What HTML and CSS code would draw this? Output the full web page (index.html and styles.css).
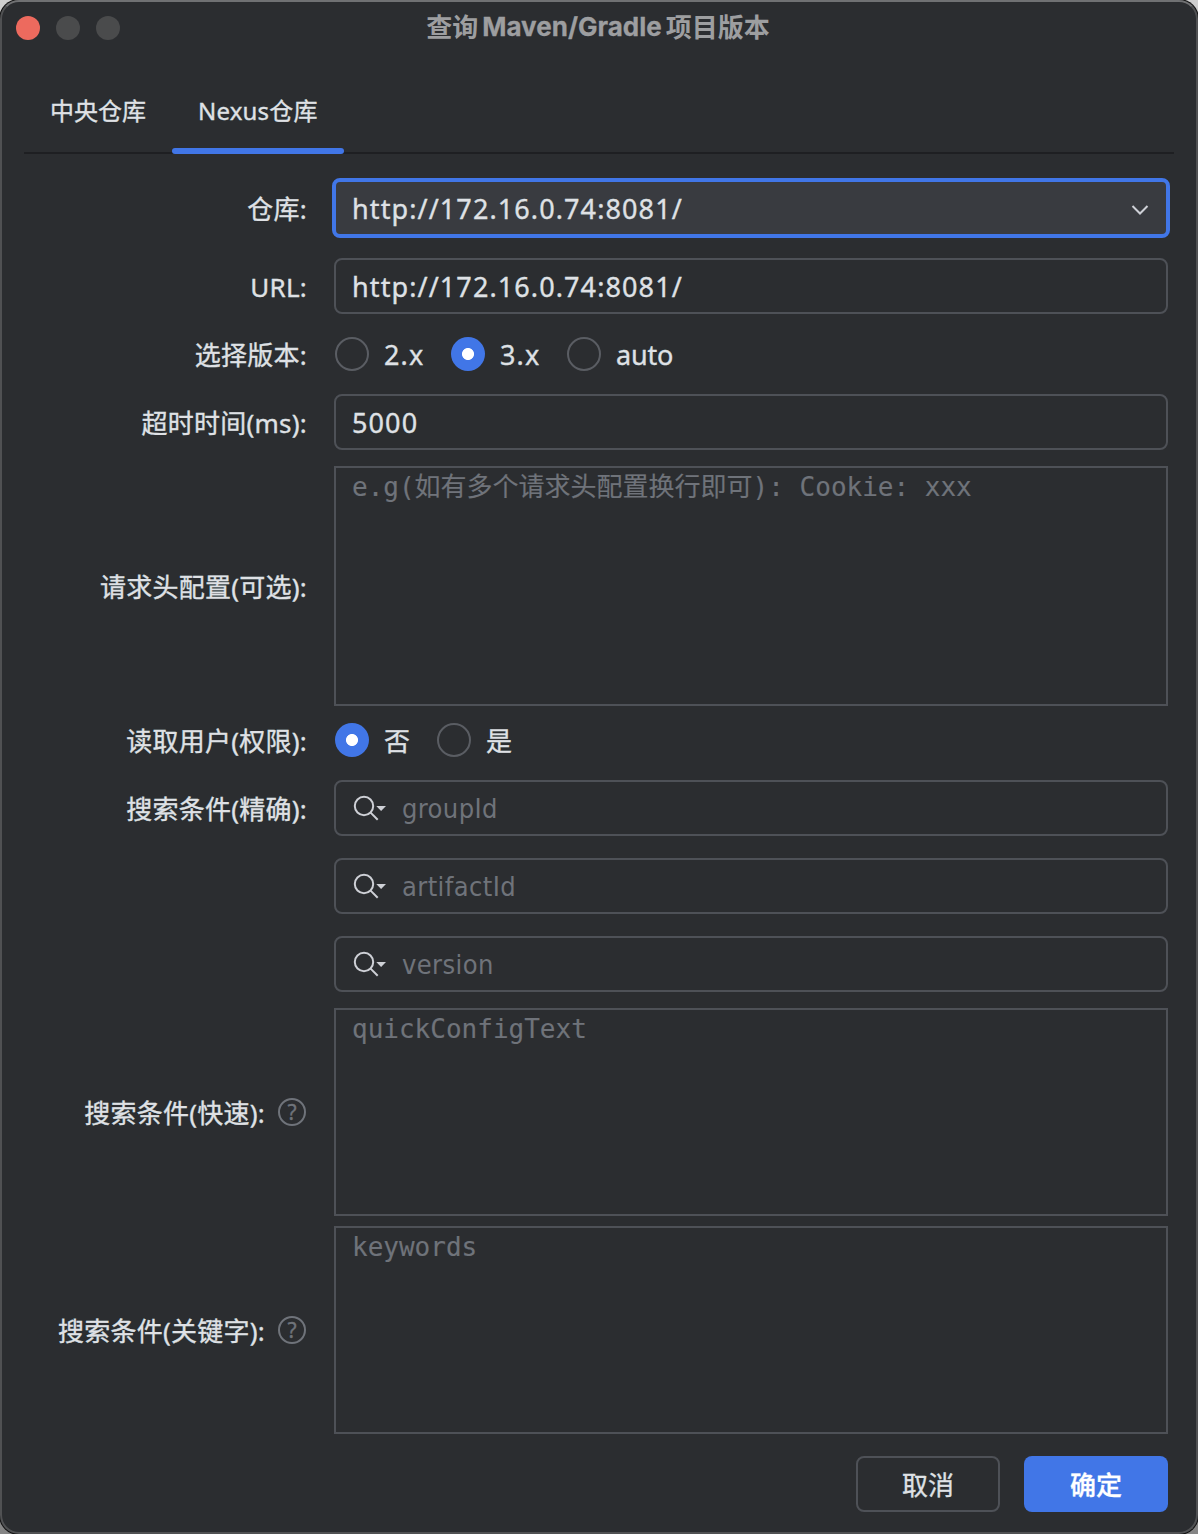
FILE: index.html
```html
<!DOCTYPE html>
<html lang="zh-CN">
<head>
<meta charset="utf-8">
<title>查询 Maven/Gradle 项目版本</title>
<link rel="stylesheet" href="styles.css">
</head>
<body>
<svg class="defs" width="0" height="0" aria-hidden="true">
  <symbol id="search" viewBox="0 0 34 28">
    <circle cx="12" cy="12" r="9.2" fill="none" stroke="#ced0d6" stroke-width="2"/>
    <path d="M18.6 18.6 25.7 25.7" stroke="#ced0d6" stroke-width="2" fill="none"/>
    <path d="M24.3 12H34L29.1 17Z" fill="#ced0d6"/>
  </symbol>
</svg>
<div class="window">
  <header class="titlebar">
    <div class="lights"><i class="light close"></i><i class="light"></i><i class="light"></i></div>
    <h1 class="title"><span>查询</span><span class="title-latin">Maven/Gradle</span><span>项目版本</span></h1>
  </header>
  <nav class="tabs">
    <div class="tab">中央仓库</div>
    <div class="tab active">Nexus仓库</div>
  </nav>
  <main class="form">
    <div class="row row-combo">
      <label class="label">仓库:</label>
      <div class="combo"><span class="value">http://172.16.0.74:8081/</span>
        <svg class="chevron" width="18" height="12" viewBox="0 0 18 12"><path d="M1.5 2 9 9.5 16.5 2" fill="none" stroke="#ced0d6" stroke-width="2"/></svg>
      </div>
    </div>
    <div class="row row-url">
      <label class="label">URL:</label>
      <div class="input"><span class="value">http://172.16.0.74:8081/</span></div>
    </div>
    <div class="row row-radio">
      <label class="label">选择版本:</label>
      <div class="radios">
        <div class="option"><i class="radio"></i><span class="value">2.x</span></div>
        <div class="option"><i class="radio checked"></i><span class="value">3.x</span></div>
        <div class="option"><i class="radio"></i><span class="value word">auto</span></div>
      </div>
    </div>
    <div class="row row-timeout">
      <label class="label">超时时间(ms):</label>
      <div class="input"><span class="value">5000</span></div>
    </div>
    <div class="row row-headers">
      <label class="label">请求头配置(可选):</label>
      <div class="area area-tall">e.g(如有多个请求头配置换行即可): Cookie: xxx</div>
    </div>
    <div class="row row-radio">
      <label class="label">读取用户(权限):</label>
      <div class="radios radios-cjk">
        <div class="option"><i class="radio checked"></i><span class="choice">否</span></div>
        <div class="option"><i class="radio"></i><span class="choice">是</span></div>
      </div>
    </div>
    <div class="row row-search">
      <label class="label">搜索条件(精确):</label>
      <div class="input"><svg class="search" width="34" height="28"><use href="#search"/></svg><span class="hint">groupId</span></div>
    </div>
    <div class="row row-search">
      <span></span>
      <div class="input"><svg class="search" width="34" height="28"><use href="#search"/></svg><span class="hint">artifactId</span></div>
    </div>
    <div class="row row-last-search">
      <span></span>
      <div class="input"><svg class="search" width="34" height="28"><use href="#search"/></svg><span class="hint">version</span></div>
    </div>
    <div class="row row-quick">
      <label class="label with-help"><span>搜索条件(快速):</span><i class="help">?</i></label>
      <div class="area">quickConfigText</div>
    </div>
    <div class="row row-keywords">
      <label class="label with-help"><span>搜索条件(关键字):</span><i class="help">?</i></label>
      <div class="area">keywords</div>
    </div>
  </main>
  <footer class="actions">
    <button class="button">取消</button>
    <button class="button primary">确定</button>
  </footer>
</div>
</body>
</html>
```
FILE: styles.css
```css
* { box-sizing: border-box; }

body {
  margin: 0;
  background: linear-gradient(#cfcfcf, #858585);
  color: #dfe1e5;
  font: 26px/32px "Noto Sans", "Noto Sans CJK SC", sans-serif;
  -webkit-text-stroke: .35px currentColor;
}

.defs { position: absolute; }

.window {
  width: 1198px;
  height: 1534px;
  overflow: hidden;
  border: 2px solid #505153;
  border-top-color: #707173;
  border-radius: 19px;
  background: #2b2d30;
  box-shadow: 0 0 0 1px #111;
}

.titlebar {
  display: grid;
  grid-template-columns: 1fr auto 1fr;
  height: 70px;
}

.lights { display: flex; gap: 16px; padding: 14px 0 0 14px; }
.light { width: 24px; height: 24px; border-radius: 50%; background: #4a4b4c; }
.close { background: #ed6a5e; }

.title {
  display: flex;
  gap: 4px;
  margin: 8px 2px 0 0;
  color: #9d9ea0;
  font: 700 26px/32px "Noto Sans CJK SC", sans-serif;
  -webkit-text-stroke: 0;
}
.title-latin { padding-top: 1px; font-family: Inter, sans-serif; line-height: 31px; -webkit-text-stroke: .3px currentColor; }

.tabs {
  display: flex;
  height: 82px;
  margin: 0 22px;
  border-bottom: 2px solid #1e1f22;
  font-size: 24px;
}
.tab { padding: 23px 26px 0; height: 82px; }
.active {
  display: flex;
  flex-direction: column;
  justify-content: space-between;
  width: 172px;
  padding: 23px 0 0;
  text-indent: 26px;
  letter-spacing: .2px;
}
.active::after {
  content: "";
  height: 6px;
  border-radius: 3px;
  background: #4176e7;
}

.form { display: flex; flex-direction: column; padding: 24px 28px 0 0; }
.row {
  display: grid;
  grid-template-columns: 306px 834px;
  column-gap: 26px;
  align-items: center;
}
.label { padding: 1px 1px 0 0; text-align: right; letter-spacing: .25px; }

.row-combo { height: 60px; margin-bottom: 20px; }
.row-url { margin-bottom: 23px; }
.row-radio { height: 34px; margin-bottom: 23px; }
.row-timeout { margin-bottom: 16px; }
.row-headers { margin-bottom: 17px; }
.row-search { margin-bottom: 22px; }
.row-last-search { margin-bottom: 16px; }
.row-quick { margin-bottom: 10px; }

.input, .combo {
  display: flex;
  align-items: center;
  height: 56px;
  padding: 0 16px;
  border: 2px solid #4e5157;
  border-radius: 8px;
}
.combo {
  height: 60px;
  margin: 0 -2px;
  border: 4px solid #4176e7;
  background: #393b40;
}
.value { padding-top: 1px; font-size: 27px; letter-spacing: 1.1px; }
.word { letter-spacing: -.2px; }
.choice { padding-top: 1px; }
.chevron { margin: 4px 1px 0 auto; }

.search { flex: none; margin-right: 16px; }
.hint {
  padding-top: 2px;
  color: #6f737a;
  font: 27px/32px "DejaVu Sans Condensed", "DejaVu Sans", sans-serif;
  font-stretch: condensed;
  letter-spacing: .4px;
  -webkit-text-stroke: 0;
}

.radios { display: flex; height: 34px; padding-left: 1px; }
.option { display: flex; align-items: center; width: 116px; gap: 15px; }
.radios-cjk .option { width: 102px; }
.radio { flex: none; width: 34px; height: 34px; border: 2px solid #5a5d63; border-radius: 50%; }
.checked { border: 0; background: radial-gradient(circle, #fff 0 5.6px, #4176e7 6.4px); }

.area {
  height: 208px;
  padding: 3px 16px;
  border: 2px solid #4e5157;
  color: #6f737a;
  font: 26px/32px "DejaVu Sans Mono", "Noto Sans CJK SC", monospace;
  -webkit-text-stroke: .15px currentColor;
}
.area-tall { height: 240px; }

.with-help { display: flex; justify-content: flex-end; align-items: center; gap: 13px; padding: 0 2px 0 0; }
.with-help span { padding-top: 1px; }
.help {
  width: 28px;
  height: 28px;
  border: 2px solid #6f737a;
  border-radius: 50%;
  color: #6f737a;
  font: normal 21px/24px "Noto Sans", sans-serif;
  text-align: center;
  letter-spacing: 0;
}

.actions { display: flex; justify-content: flex-end; gap: 24px; padding: 22px 28px 0 0; }
.button {
  width: 144px;
  height: 56px;
  padding: 0 0 1px;
  border: 2px solid #4e5157;
  border-radius: 8px;
  background: none;
  color: #dfe1e5;
  font: 26px/32px "Noto Sans CJK SC", sans-serif;
  -webkit-text-stroke: .35px currentColor;
}
.primary { border: 0; background: #4176e7; color: #fff; font-weight: 500; }
```
